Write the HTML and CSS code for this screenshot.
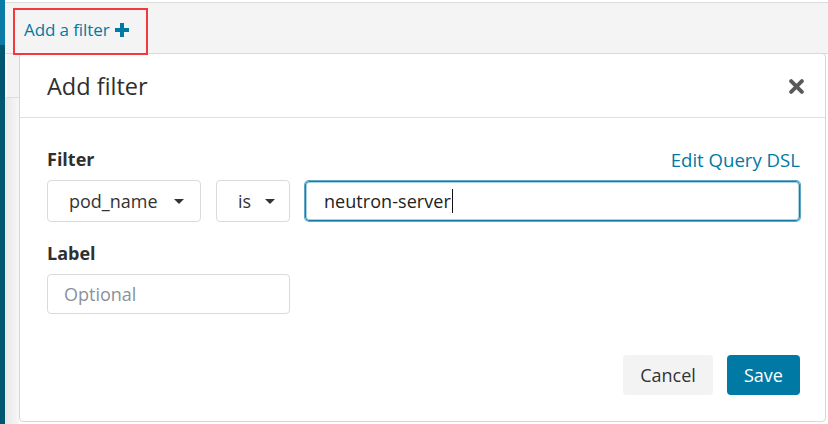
FILE: index.html
```html
<!DOCTYPE html>
<html>
<head>
<meta charset="utf-8">
<link rel="stylesheet" href="styles.css">
</head>
<body>
<div class="app">
  <div class="sidenav"></div>
  <div class="main">
    <div class="topbar">
      <a class="add-link">Add a filter
        <svg class="plus" viewBox="0 0 14 14" width="14" height="14"><path d="M5 0h4v5h5v4H9v5H5V9H0V5h5z" fill="#0079a5"/></svg>
      </a>
      <div class="annotation"></div>
    </div>
    <div class="content">
      <div class="gutter"><div class="gutter-top"></div></div>
      <div class="modal">
        <div class="modal-header">
          <h2 class="modal-title">Add filter</h2>
          <svg class="close" viewBox="0 0 14 14" width="15" height="15"><path d="M2 2L12 12M12 2L2 12" stroke="#595959" stroke-width="3.6" stroke-linecap="round"/></svg>
        </div>
        <div class="modal-body">
          <div class="field-head">
            <span class="label">Filter</span>
            <a class="dsl-link">Edit Query DSL</a>
          </div>
          <div class="filter-row">
            <div class="select select-field">pod_name <span class="caret"></span></div>
            <div class="select select-op">is <span class="caret"></span></div>
            <div class="value-input">neutron-server<span class="text-caret"></span></div>
          </div>
          <div class="field-head label-head">
            <span class="label">Label</span>
          </div>
          <input class="label-input" type="text" placeholder="Optional">
        </div>
        <div class="modal-footer">
          <button class="btn btn-cancel">Cancel</button>
          <button class="btn btn-save">Save</button>
        </div>
      </div>
    </div>
  </div>
</div>
</body>
</html>
```

FILE: styles.css
```css
* { box-sizing: border-box; }
html, body { margin: 0; padding: 0; background: #fff; }
body {
  font-family: "Open Sans", "Noto Sans", sans-serif;
  color: #333;
  width: 828px;
  height: 424px;
  overflow: hidden;
}
.app { display: flex; height: 424px; }
.sidenav {
  width: 5px;
  flex: none;
  background: linear-gradient(to bottom, #0a7aa6 0, #0a7aa6 45px, #00556f 45px, #00556f 100%);
}
.main { flex: 1; display: flex; flex-direction: column; min-width: 0; }
.topbar {
  position: relative;
  margin-top: 2px;
  height: 52px;
  border-top: 1px solid #dcdcdc;
  border-bottom: 1px solid #d9d9d9;
  background: #f4f4f4;
  display: flex;
  align-items: center;
  padding-left: 19px;
  padding-top: 3px;
}
.add-link {
  color: #0079a5;
  font-size: 17px;
  display: flex;
  align-items: center;
  gap: 5px;
  letter-spacing: -0.1px;
}
.plus { margin-top: 1px; }
.annotation {
  position: absolute;
  left: 8px;
  top: 5px;
  width: 135px;
  height: 47px;
  border: 2px solid #f5383a;
  z-index: 2;
}
.content { flex: 1; display: flex; margin-top: -1px; }
.gutter {
  width: 14px;
  flex: none;
  background: linear-gradient(to right, #e7e7e7, #f7f7f7);
}
.gutter-top {
  height: 45px;
  background: #f3f3f3;
  border-left: 2px solid #fbfbfb;
  border-bottom: 1px solid #dedede;
}
.modal {
  flex: 1;
  margin-right: 2px;
  margin-bottom: 2px;
  background: #fff;
  border: 1px solid #d6d6d6;
  border-radius: 4px;
  display: flex;
  flex-direction: column;
}
.modal-header {
  height: 64px;
  border-bottom: 1px solid #e0e0e0;
  display: flex;
  align-items: center;
  justify-content: space-between;
  padding: 0 21px 0 27px;
}
.modal-title {
  margin: 0;
  font-size: 23.5px;
  font-weight: 400;
  color: #2f2f2f;
}
.close { margin-top: 2px; }
.modal-body { padding: 28px 25px 0 27px; }
.field-head {
  display: flex;
  justify-content: space-between;
  align-items: center;
  height: 26px;
  margin-bottom: 8px;
}
.label-head { margin-top: 18px; margin-bottom: 8px; }
.label { font-weight: 700; font-size: 18px; color: #2f2f2f; }
.dsl-link { color: #0079a5; font-size: 18.6px; }
.filter-row { display: flex; align-items: center; height: 42px; }
.select {
  height: 42px;
  border: 1px solid #dadada;
  border-radius: 4px;
  display: flex;
  align-items: center;
  font-size: 18px;
  color: #333;
  padding-left: 21px;
}
.select-field { width: 154px; margin-right: 15px; gap: 16px; }
.select-op { width: 74px; margin-right: 15px; gap: 14px; }
.caret {
  width: 0;
  height: 0;
  border-left: 5px solid transparent;
  border-right: 5px solid transparent;
  border-top: 5px solid #333;
  margin-top: 1px;
}
.value-input {
  flex: 1;
  height: 40px;
  border: 1px solid #137fa8;
  border-radius: 4px;
  box-shadow: 0 0 0 1px #5ea7c6, inset 0 0 0 1px #a9d2e3;
  display: flex;
  align-items: center;
  padding-left: 18px;
  font-size: 18px;
  color: #222;
  letter-spacing: 0.05px;
}
.text-caret {
  display: inline-block;
  width: 1px;
  height: 24px;
  background: #111;
  margin-left: 1px;
}
.label-input {
  display: block;
  width: 243px;
  height: 40px;
  border: 1px solid #dadada;
  border-radius: 4px;
  padding: 0 0 0 16px;
  font-family: "Open Sans", "Noto Sans", sans-serif;
  font-size: 18px;
  outline: none;
}
.label-input::placeholder { color: #8a929b; }
.modal-footer {
  margin-top: auto;
  display: flex;
  justify-content: flex-end;
  gap: 14px;
  padding: 0 25px 26px 0;
}
.btn {
  height: 40px;
  border: none;
  border-radius: 4px;
  font-family: "Open Sans", "Noto Sans", sans-serif;
  font-size: 18px;
  padding: 0;
}
.btn-cancel { width: 90px; background: #f3f3f3; color: #333; }
.btn-save { width: 73px; background: #0079a5; color: #fff; }
```
